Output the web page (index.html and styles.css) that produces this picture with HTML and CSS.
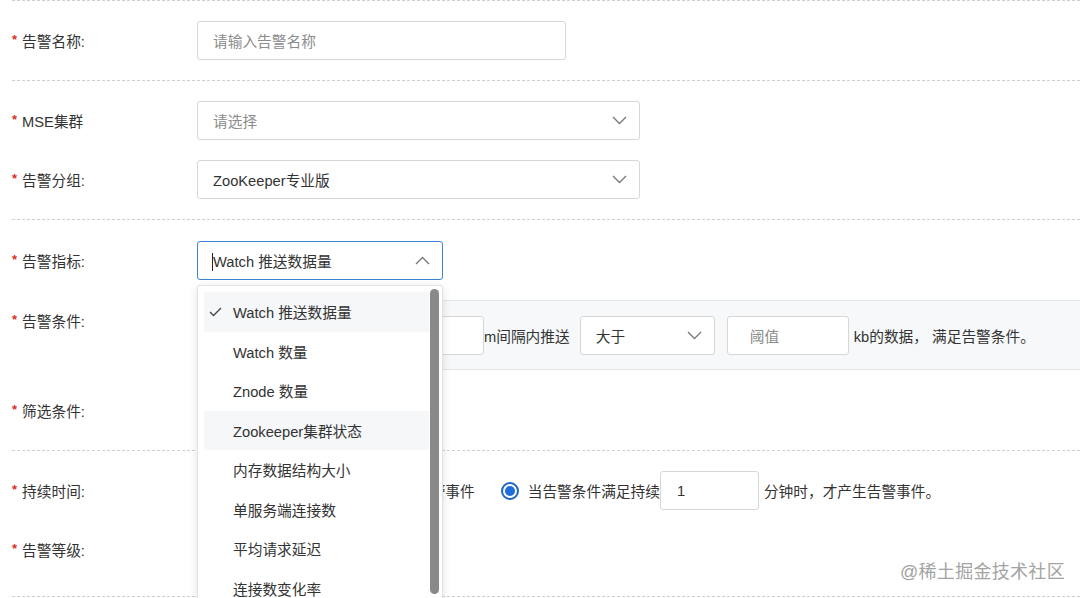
FILE: index.html
```html
<!DOCTYPE html>
<html lang="zh-CN">
<head>
  <meta charset="UTF-8" />
  <title>创建告警规则</title>
  <link rel="stylesheet" href="styles.css">
</head>
<body>

  <div class="form">
    <div class="section">
      <div class="item">
        <div class="label"><span class="req">*</span>告警名称:</div>
        <div class="field w-name"><span class="placeholder">请输入告警名称</span></div>
      </div>
    </div>

    <div class="section">
      <div class="item">
        <div class="label"><span class="req">*</span>MSE集群</div>
        <div class="field select w-wide">
          <span class="placeholder">请选择</span>
          <svg class="arrow" width="15" height="9" viewBox="0 0 15 9"><polyline points="1,1 7.5,7.5 14,1" /></svg>
        </div>
      </div>
      <div class="item">
        <div class="label"><span class="req">*</span>告警分组:</div>
        <div class="field select w-wide">
          <span class="value">ZooKeeper专业版</span>
          <svg class="arrow" width="15" height="9" viewBox="0 0 15 9"><polyline points="1,1 7.5,7.5 14,1" /></svg>
        </div>
      </div>
    </div>

    <div class="section section-metric">
      <div class="item">
        <div class="label"><span class="req">*</span>告警指标:</div>
        <div class="metric-wrap">
          <div class="field select focused w-metric">
            <span class="value"><span class="caret"></span>Watch 推送数据量</span>
            <svg class="arrow" width="15" height="9" viewBox="0 0 15 9"><polyline points="1,8 7.5,1.5 14,8" /></svg>
          </div>

          <div class="menu">
            <ul class="menu-list">
              <li class="menu-item active">
                <svg class="check" width="13" height="10" viewBox="0 0 13 10"><polyline points="1,5 4.5,8.5 12,1" /></svg>
                Watch 推送数据量
              </li>
              <li class="menu-item">Watch 数量</li>
              <li class="menu-item">Znode 数量</li>
              <li class="menu-item hover">Zookeeper集群状态</li>
              <li class="menu-item">内存数据结构大小</li>
              <li class="menu-item">单服务端连接数</li>
              <li class="menu-item">平均请求延迟</li>
              <li class="menu-item">连接数变化率</li>
            </ul>
            <div class="scrollbar"></div>
          </div>
        </div>
      </div>

      <div class="item item-top">
        <div class="label label-tall"><span class="req">*</span>告警条件:</div>
        <div class="panel">
          <div class="field w-period"></div>
          <span class="text">m间隔内推送</span>
          <div class="field select w-op">
            <span class="value">大于</span>
            <svg class="arrow" width="15" height="9" viewBox="0 0 15 9"><polyline points="1,1 7.5,7.5 14,1" /></svg>
          </div>
          <div class="field w-threshold"><span class="placeholder">阈值</span></div>
          <span class="text text-after">kb的数据， 满足告警条件。</span>
        </div>
      </div>

      <div class="item item-tall">
        <div class="label"><span class="req">*</span>筛选条件:</div>
      </div>
    </div>

    <div class="section section-last">
      <div class="item">
        <div class="label"><span class="req">*</span>持续时间:</div>
        <div class="radios">
          <label class="radio radio-first"><span class="dot"></span>当告警条件满足时，立即产生告警事件</label>
          <label class="radio"><span class="dot checked"></span>当告警条件满足持续</label>
          <div class="field w-minutes"><span class="value">1</span></div>
          <span class="text text-after">分钟时，才产生告警事件。</span>
        </div>
      </div>
      <div class="item">
        <div class="label"><span class="req">*</span>告警等级:</div>
      </div>
    </div>
  </div>

  <div class="watermark">@稀土掘金技术社区</div>

</body>
</html>
```

FILE: styles.css
```css
* {
  box-sizing: border-box;
}

html, body {
  width: 1080px;
  height: 598px;
  overflow: hidden;
}

body {
  margin: 0;
  background: #fff;
  color: #333;
  font-family: "Liberation Sans", "Noto Sans CJK SC", sans-serif;
  font-size: 14.7px;
  position: relative;
}

.form {
  margin-left: 12px;
}

.section {
  border-top: 1px dashed #cfcfcf;
  padding: 20px 0;
  display: flex;
  flex-direction: column;
  gap: 20px;
}

.section-metric {
  padding: 21px 0 20px;
}

.section-last {
  padding: 20px 0 27px;
  border-bottom: 1px dashed #cfcfcf;
}

.item {
  display: flex;
  align-items: center;
  height: 39px;
}

.item-top {
  align-items: flex-start;
  height: 70px;
}

.item-tall {
  height: 40px;
}

.label {
  width: 185px;
  flex-shrink: 0;
  display: flex;
  align-items: center;
  color: #333;
}

.label-tall {
  height: 40px;
}

.req {
  color: #d93026;
  font-size: 13px;
  font-weight: bold;
  margin-right: 5px;
  position: relative;
  top: -1px;
}

/* inputs & selects */
.field {
  height: 39px;
  border: 1px solid #d7d7d7;
  border-radius: 3px;
  background: #fff;
  display: flex;
  align-items: center;
  padding: 0 12px 0 15px;
  flex-shrink: 0;
}

.select {
  justify-content: space-between;
}

.placeholder {
  color: #8c8c8c;
}

.value {
  color: #333;
}

.arrow polyline {
  fill: none;
  stroke: #777;
  stroke-width: 1.3;
}

.focused {
  border-color: #3a86d6;
}

.caret {
  display: inline-block;
  width: 1px;
  height: 18px;
  background: #222;
  vertical-align: -4px;
  margin-left: -1px;
}

.w-name { width: 369px; }
.w-wide { width: 443px; }
.w-metric { width: 246px; }
.w-period { width: 271px; }
.w-op { width: 135px; margin-left: 10px; }
.w-threshold { width: 122px; margin-left: 12px; padding-left: 22px; }
.w-minutes { width: 99px; padding-left: 16px; }

/* dropdown */
.metric-wrap {
  position: relative;
}

.menu {
  position: absolute;
  top: 44px;
  left: 0;
  width: 246px;
  height: 330px;
  background: #fff;
  border: 1px solid #e3e3e3;
  border-radius: 3px;
  box-shadow: 0 2px 8px rgba(0, 0, 0, 0.12);
  z-index: 10;
  overflow: hidden;
}

.menu-list {
  list-style: none;
  margin: 0;
  padding: 6px 13px 0 6px;
}

.menu-item {
  height: 39.5px;
  display: flex;
  align-items: center;
  padding-left: 29px;
  position: relative;
  color: #333;
}

.menu-item.active,
.menu-item.hover {
  background: #f6f7f9;
}

.check {
  position: absolute;
  left: 5px;
  top: 15px;
}

.check polyline {
  fill: none;
  stroke: #444;
  stroke-width: 1.3;
}

.scrollbar {
  position: absolute;
  top: 3px;
  right: 3px;
  width: 9px;
  height: 305px;
  border-radius: 5px;
  background: #898989;
}

/* condition panel */
.panel {
  flex: 1;
  height: 70px;
  background: #f6f8f9;
  border-top: 1px solid #e3e6e8;
  border-bottom: 1px solid #e3e6e8;
  display: flex;
  align-items: center;
  padding-left: 16px;
}

.text {
  white-space: nowrap;
  color: #333;
}

.text-after {
  margin-left: 5px;
}

/* duration radios */
.radios {
  display: flex;
  align-items: center;
}

.radio {
  display: flex;
  align-items: center;
  white-space: nowrap;
  color: #333;
}

.radio-first {
  margin-right: 26px;
  padding-left: 1px;
}

.dot {
  width: 18px;
  height: 18px;
  border-radius: 50%;
  border: 1px solid #bbb;
  margin-right: 9px;
  background: #fff;
  position: relative;
}

.dot.checked {
  border: 2px solid #1f64c4;
}

.dot.checked::after {
  content: '';
  position: absolute;
  left: 2px;
  top: 2px;
  width: 10px;
  height: 10px;
  border-radius: 50%;
  background: #1d6ddc;
}

.watermark {
  position: absolute;
  left: 900px;
  top: 557px;
  font-size: 18px;
  color: #a3a3a3;
  letter-spacing: 0.3px;
}
```
